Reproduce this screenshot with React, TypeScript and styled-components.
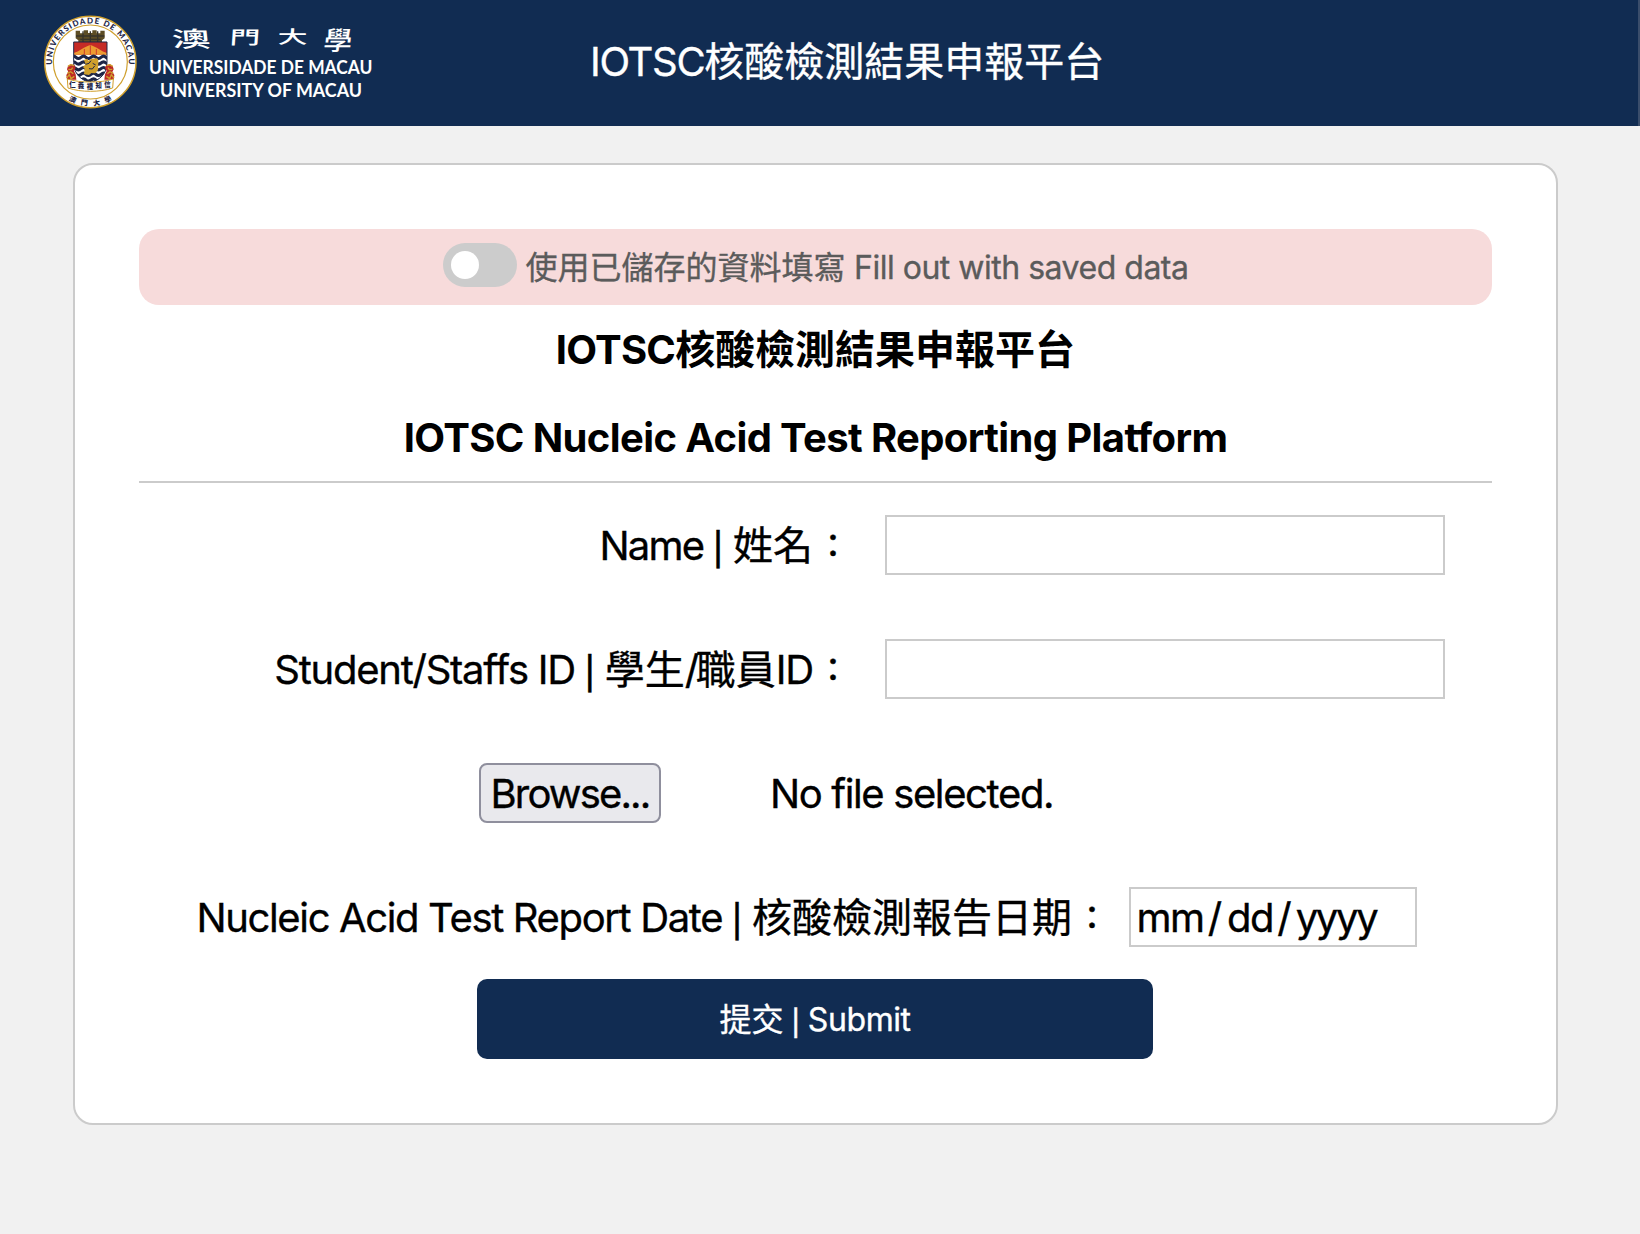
import React, { useState } from "react";
import styled, { createGlobalStyle } from "styled-components";

const NAVY = "#112c52";
const BORDER = "#cbcbcb";

const GlobalStyle = createGlobalStyle`
  *, *::before, *::after { box-sizing: border-box; }
  body {
    margin: 0;
    background: #f1f1f1;
    color: #000;
    font-family: Inter, "Noto Sans CJK TC", sans-serif;
    font-size: 40px;
    font-weight: 400;
    font-variant-ligatures: none;
    line-height: 60px;
    -webkit-text-stroke: 0.35px;
  }
`;

const Page = styled.div`
  min-height: 1234px;
`;

const Header = styled.header`
  display: flex;
  align-items: center;
  height: 126px;
  padding: 0 0 3px 30px;
  background: ${NAVY};
  color: #fff;
  border-right: 2px solid #3a4d6b;
`;

const LogoArt = styled.svg`
  display: block;
  flex: none;
  width: 360px;
  height: 123px;
  -webkit-text-stroke: 0;
`;

const HeaderTitle = styled.div`
  margin-left: 200px;
  padding-top: 1px;
  white-space: nowrap;
`;

const Card = styled.main`
  display: flex;
  flex-direction: column;
  width: 1485px;
  height: 962px;
  margin: 37px 0 0 73px;
  padding: 64px;
  background: #fff;
  border: 2px solid ${BORDER};
  border-radius: 20px;
`;

const Banner = styled.label`
  display: flex;
  align-items: center;
  justify-content: center;
  height: 76px;
  padding-top: 2px;
  border-radius: 20px;
  background: #f7dbdb;
  color: #5b5b5b;
  font-size: 32px;
  white-space: pre;
`;

const Toggle = styled.button<{ $on: boolean }>`
  display: flex;
  align-items: center;
  justify-content: ${(p) => (p.$on ? "flex-end" : "flex-start")};
  width: 74px;
  height: 44px;
  margin: 0 9px 6px 0;
  padding: 0 8px;
  border: 0;
  border-radius: 22px;
  background: ${(p) => (p.$on ? NAVY : "#ccc")};
`;

const Knob = styled.span`
  width: 28px;
  height: 28px;
  border-radius: 50%;
  background: #fff;
`;

const Heading = styled.h1<{ $top: number }>`
  margin: ${(p) => p.$top}px 0 0;
  font-size: 40px;
  font-weight: 700;
  line-height: 60px;
  text-align: center;
  -webkit-text-stroke: 0;
`;

const Divider = styled.hr`
  width: 100%;
  height: 2px;
  margin: 13px 0 32px;
  border: 0;
  background: ${BORDER};
`;

const Form = styled.form`
  display: flex;
  flex-direction: column;
  gap: 64px;
`;

const Row = styled.div<{ $inset: number; $gap: number; $start?: boolean }>`
  display: flex;
  align-items: center;
  justify-content: ${(p) => (p.$start ? "flex-start" : "flex-end")};
  gap: ${(p) => p.$gap}px;
  height: 60px;
  padding: ${(p) => (p.$start ? `0 0 0 ${p.$inset}px` : `0 ${p.$inset}px 0 0`)};
  white-space: nowrap;
`;

const Label = styled.label`
  padding-top: 2px;
`;

/* Latin run with its own tracking, set beside full-width characters. */
const Latin = styled.span<{ $track: number }>`
  letter-spacing: ${(p) => p.$track}px;
`;

const Bar = styled.span<{ $side?: number }>`
  margin: 0 ${(p) => p.$side ?? 9.4}px;
  font-size: 0.8em;
  font-weight: 500;
  line-height: 0;
  vertical-align: -0.02em;
`;

const Colon = styled.span`
  display: inline-block;
  width: 40px;
  font-size: 32px;
  font-weight: 500;
  line-height: 0;
  text-align: center;
  vertical-align: 3px;
`;

const TextInput = styled.input`
  width: 560px;
  height: 60px;
  padding: 0 8px;
  border: 2px solid ${BORDER};
  background: #fff;
  font: inherit;
  outline: none;
`;

const BrowseButton = styled.button`
  width: 182px;
  height: 60px;
  padding: 2px 0 0;
  border: 2px solid #8f8f9d;
  border-radius: 8px;
  background: #e9e9ed;
  color: #000;
  font: inherit;
  line-height: 54px;
  letter-spacing: -1.85px;
`;

const FileStatus = styled.span`
  padding-top: 2px;
  letter-spacing: -1.37px;
`;

const DateField = styled.div`
  display: flex;
  align-items: center;
  width: 288px;
  height: 60px;
  padding: 2px 0 0 4px;
  border: 2px solid ${BORDER};
  background: #fff;
`;

const DatePart = styled.span<{ $width: number; $track: number }>`
  width: ${(p) => p.$width}px;
  text-align: center;
  letter-spacing: ${(p) => p.$track}px;
`;

const Submit = styled.button`
  align-self: center;
  width: 676px;
  height: 80px;
  margin: 32px 1px 0 0;
  padding: 2px 0 0;
  border: 0;
  border-radius: 10px;
  background: ${NAVY};
  color: #fff;
  font: inherit;
  font-size: 32px;
`;

const GOLD = "#cf9f2c";
const INK = "#1d2547";

function Lion({ flip }: { flip?: boolean }) {
  return (
    <g transform={flip ? "translate(302 0) scale(-1 1)" : undefined}>
      <path d="M84 168l8-5 11 2 4 9-5 9 5 10 2 16H81l-2-14 6-9-4-8z" fill="#bd2a26" />
      <path
        d="M84 169l8-5 10 3M85 178l9 1 4-6M82 190l10-5 8 6M80 204l8-10 5 12 10-7"
        fill="none"
        stroke={GOLD}
        strokeWidth="4"
      />
    </g>
  );
}

function Logo() {
  return (
    <LogoArt viewBox="30 0 360 123" aria-label="University of Macau">
      <g transform="translate(40 10) scale(0.33333)">
        <circle cx="151" cy="156" r="137" fill="#fff" stroke={GOLD} strokeWidth="4.5" />
        <circle cx="151" cy="156" r="111" fill="none" stroke={GOLD} strokeWidth="3.5" />
        <path id="sealArc" d="M36.5 166A115 115 0 1 1 265.500 166" fill="none" />
        <text fill={INK} fontFamily="Lato, sans-serif" fontWeight="900" fontSize="24">
          <textPath href="#sealArc" startOffset="2" textLength="378" lengthAdjust="spacing">
            UNIVERSIDADE DE MACAU
          </textPath>
        </text>

        <path
          d="M107 62h13v8h11v-9h13v8h13v-8h13v9h11v-8h13v23l-8 6v10h-71v-10l-8-6z"
          fill="#5d4d25"
        />
        <path
          d="M108 78h85M121 88h61M129 64v32M151 64v32M173 64v32"
          stroke="#37332a"
          strokeWidth="4"
        />

        <clipPath id="shield">
          <path d="M101 96h100v62c0 34-22 52-50 60c-28-8-50-26-50-60z" />
        </clipPath>
        <g clipPath="url(#shield)">
          <path d="M101 96h100v124H101z" fill="#fff" />
          <path d="M101 96h100v38H101z" fill="#c62b26" />
          <path d="M101 129c16-4 33-20 50-24c17 4 34 20 50 24v5H101z" fill="#ec9b31" />
          <path d="M151 106v28M133 117v17M169 117v17" stroke="#c62b26" strokeWidth="2.5" />
          {[142, 159, 176, 193, 210].map((y) => (
            <path
              key={y}
              d={`M93 ${y}q8-7 15 0t15 0t15 0t15 0t15 0t15 0t15 0t15 0`}
              fill="none"
              stroke={INK}
              strokeWidth="9"
            />
          ))}
          <path d="M132 150l10-4 3 6 10-6 16-1 4 5-1 30-8 10-12-1-7 6-15-2 2-17-5-5 8-8z" fill={GOLD} />
          <path d="M137 163l10-3 6-8M147 176l10 1 7-9M158 160l9 5" stroke={INK} strokeWidth="3" fill="none" />
        </g>
        <path
          d="M101 96h100v62c0 34-22 52-50 60c-28-8-50-26-50-60z"
          fill="none"
          stroke={INK}
          strokeWidth="3"
        />

        <Lion />
        <Lion flip />
        <path
          d="M82 207c22 7 44 9 69 9s47-2 69-9l-2 27c-21 7-43 10-67 10s-46-3-67-10z"
          fill="#fff"
          stroke={GOLD}
          strokeWidth="3"
        />
        <g
          fill={INK}
          fontFamily='"Noto Sans CJK TC", sans-serif'
          fontWeight="900"
          textAnchor="middle"
        >
          <g fontSize="19">
            <text x="97" y="230">仁</text>
            <text x="123" y="235">義</text>
            <text x="150" y="236">禮</text>
            <text x="176" y="235">知</text>
            <text x="202" y="230">信</text>
          </g>
          <g fontSize="21">
            <text transform="translate(95 276) rotate(24)">澳</text>
            <text transform="translate(132 286) rotate(8)">門</text>
            <text transform="translate(171 286) rotate(-9)">大</text>
            <text transform="translate(207 275) rotate(-25)">學</text>
          </g>
        </g>
      </g>

      <g
        fill="#fff"
        fontFamily='"Noto Sans CJK TC", sans-serif'
        fontWeight="500"
        textAnchor="middle"
      >
        <text transform="translate(192 46.500) skewX(6) scale(1.75 1)" fontSize="22">澳</text>
        <text transform="translate(244.500 43.500) skewX(-4) scale(1.7 1)" fontSize="18">門</text>
        <text transform="translate(292.500 43) scale(1.75 1)" fontSize="17">大</text>
        <text transform="translate(337 49.500) skewX(-6) scale(1.1 1)" fontSize="26">學</text>
      </g>
      <g fill="#fff" fontFamily="Lato, sans-serif" fontWeight="700" fontSize="18">
        <text x="149" y="74" textLength="223.500" lengthAdjust="spacingAndGlyphs">
          UNIVERSIDADE DE MACAU
        </text>
        <text x="160" y="96.500" textLength="202" lengthAdjust="spacingAndGlyphs">
          UNIVERSITY OF MACAU
        </text>
      </g>
    </LogoArt>
  );
}

export default function App() {
  const [useSaved, setUseSaved] = useState(false);
  return (
    <Page lang="zh-Hant">
      <GlobalStyle />
      <Header>
        <Logo />
        <HeaderTitle>
          <Latin $track={-1.3}>IOTSC</Latin>核酸檢測結果申報平台
        </HeaderTitle>
      </Header>
      <Card>
        <Banner>
          <Toggle type="button" $on={useSaved} onClick={() => setUseSaved(!useSaved)}>
            <Knob />
          </Toggle>
          使用已儲存的資料填寫
          <Latin $track={-0.49}> Fill out with saved data</Latin>
        </Banner>
        <Heading $top={15}>
          <Latin $track={-0.8}>IOTSC</Latin>核酸檢測結果申報平台
        </Heading>
        <Heading as="h2" $top={28}>
          <Latin $track={-0.62}>IOTSC Nucleic Acid Test Reporting Platform</Latin>
        </Heading>
        <Divider />
        <Form onSubmit={(e) => e.preventDefault()}>
          <Row $inset={47} $gap={32}>
            <Label htmlFor="name">
              <Latin $track={-1.8}>Name</Latin>
              <Bar>|</Bar>姓名<Colon>：</Colon>
            </Label>
            <TextInput id="name" />
          </Row>
          <Row $inset={47} $gap={32}>
            <Label htmlFor="sid">
              <Latin $track={-1.25}>Student/Staffs ID</Latin>
              <Bar>|</Bar>學生<Latin $track={-3.4}>/</Latin>職員
              <Latin $track={-1.2}>ID</Latin>
              <Colon>：</Colon>
            </Label>
            <TextInput id="sid" />
          </Row>
          <Row $inset={340} $gap={109} $start>
            <BrowseButton type="button">Browse...</BrowseButton>
            <FileStatus>No file selected.</FileStatus>
          </Row>
          <Row $inset={75} $gap={17}>
            <Label>
              <Latin $track={-1.36}>Nucleic Acid Test Report Date</Latin>
              <Bar>|</Bar>核酸檢測報告日期<Colon>：</Colon>
            </Label>
            <DateField>
              <DatePart $width={70} $track={-1.6}>mm</DatePart>
              <DatePart $width={20} $track={0}>/</DatePart>
              <DatePart $width={50} $track={-1.5}>dd</DatePart>
              <DatePart $width={19} $track={0}>/</DatePart>
              <DatePart $width={84} $track={-2.3}>yyyy</DatePart>
            </DateField>
          </Row>
        </Form>
        <Submit type="submit">
          提交<Bar $side={7.8}>|</Bar>
          <Latin $track={-0.42}>Submit</Latin>
        </Submit>
      </Card>
    </Page>
  );
}
